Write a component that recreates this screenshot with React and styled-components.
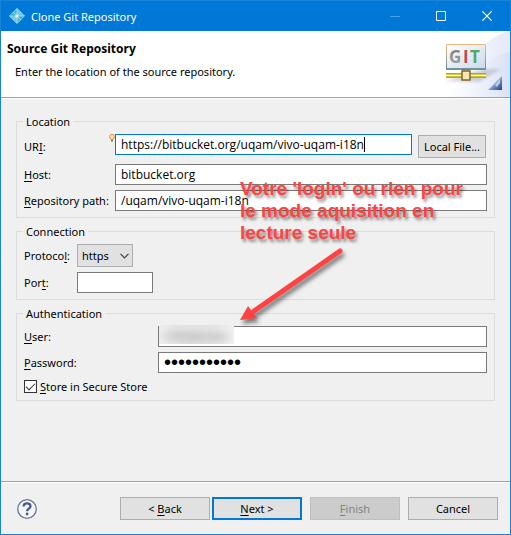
import React, { useEffect, useRef } from 'react'
import styled, { createGlobalStyle, css } from 'styled-components'

export default function App() {
    return (
        <>
            <GlobalStyle />
            <Dialog>
                <TitleBar>
                    <AppIcon />
                    <Caption>Clone Git Repository</Caption>
                    <CaptionButton type="button" aria-label="Minimize" disabled>
                        <svg width="10" height="10"><path d="M0 5.5h10" stroke="#4da0e3" /></svg>
                    </CaptionButton>
                    <CaptionButton type="button" aria-label="Maximize">
                        <svg width="10" height="10"><path d="M.5.5h9v9h-9z" fill="none" stroke="#fff" /></svg>
                    </CaptionButton>
                    <CaptionButton type="button" aria-label="Close">
                        <svg width="10" height="10"><path d="M.3.3l9.4 9.4M9.7.3L.3 9.7" stroke="#fff" strokeWidth="1.2" /></svg>
                    </CaptionButton>
                </TitleBar>
                <Header>
                    <Heading>
                        <Title>Source Git Repository</Title>
                        <Description>Enter the location of the source repository.</Description>
                    </Heading>
                    <GitBanner />
                </Header>
                <Body>
                    <LocationGroup />
                    <ConnectionGroup />
                    <AuthenticationGroup />
                </Body>
                <Footer>
                    <HelpButton type="button" aria-label="Help">
                        <HelpIcon />
                    </HelpButton>
                    <Steps>
                        <WizardButton type="button">&lt; <u>B</u>ack</WizardButton>
                        <WizardButton type="button" $primary><u>N</u>ext &gt;</WizardButton>
                    </Steps>
                    <WizardButton type="button" disabled><u>F</u>inish</WizardButton>
                    <WizardButton type="button">Cancel</WizardButton>
                </Footer>
                <Annotation />
            </Dialog>
        </>
    )
}

function LocationGroup() {
    const uri = useRef(null)

    useEffect(() => {
        const end = uri.current.value.length
        uri.current.focus()
        uri.current.setSelectionRange(end, end)
    }, [])

    return (
        <Group>
            <Legend>Location</Legend>
            <UriRow $label={91}>
                <LabelCell>
                    <Label htmlFor="uri">UR<u>I</u>:</Label>
                    <Bulb />
                </LabelCell>
                <UriFields>
                    <UriBox>
                        <TextInput id="uri" ref={uri} type="text" spellCheck={false} defaultValue="https://bitbucket.org/uqam/vivo-uqam-i18n" />
                        <Caret />
                    </UriBox>
                    <Button type="button">Local File...</Button>
                </UriFields>
            </UriRow>
            <Row $label={91}>
                <Label htmlFor="host"><u>H</u>ost:</Label>
                <TextInput id="host" type="text" spellCheck={false} defaultValue="bitbucket.org" />
            </Row>
            <Row $label={91}>
                <Label htmlFor="path"><u>R</u>epository path:</Label>
                <TextInput id="path" type="text" spellCheck={false} defaultValue="/uqam/vivo-uqam-i18n" />
            </Row>
        </Group>
    )
}

function ConnectionGroup() {
    return (
        <Group>
            <Legend>Connection</Legend>
            <Row $label={53}>
                <Label htmlFor="protocol">Protoco<u>l</u>:</Label>
                <SelectBox>
                    <Select id="protocol" defaultValue="https">
                        <option>https</option>
                        <option>ssh</option>
                        <option>git</option>
                    </Select>
                    <Chevron width="9" height="6"><path d="M.5.8l4 4 4-4" fill="none" stroke="#444" strokeWidth="1.2" /></Chevron>
                </SelectBox>
            </Row>
            <Row $label={53}>
                <Label htmlFor="port">Por<u>t</u>:</Label>
                <PortInput id="port" type="text" />
            </Row>
        </Group>
    )
}

function AuthenticationGroup() {
    return (
        <Group>
            <Legend>Authentication</Legend>
            <Row $label={134}>
                <Label htmlFor="user"><u>U</u>ser:</Label>
                <UserBox>
                    <TextInput id="user" type="text" />
                    <Redaction />
                </UserBox>
            </Row>
            <Row $label={134}>
                <Label htmlFor="password"><u>P</u>assword:</Label>
                <PasswordInput id="password" type="password" defaultValue="vivo-secret" />
            </Row>
            <CheckRow>
                <Checkbox id="store" type="checkbox" defaultChecked />
                <Label htmlFor="store"><u>S</u>tore in Secure Store</Label>
            </CheckRow>
        </Group>
    )
}

function Annotation() {
    return (
        <Note>
            <NoteText>
                Votre 'login' ou rien pour<br />
                le mode aquisition en<br />
                lecture seule
            </NoteText>
            <NoteArrow width="116" height="84">
                <path d="M100 7L14 67" stroke="#ff4343" strokeWidth="5" strokeLinecap="round" />
                <path d="M0 76L8 62L17 74z" fill="#ff4343" />
            </NoteArrow>
        </Note>
    )
}

function AppIcon() {
    return (
        <svg width="16" height="16" viewBox="0 0 16 16">
            <path d="M8 0l8 8-8 8-8-8z" fill="#35a9cf" />
            <path d="M8 0l8 8H8zM0 8h8v8z" fill="#63c6de" />
            <path d="M8 0L3 5l5 3zM13 11l-5 5V8z" fill="#4bb4d6" />
            <path d="M8 1v14M1 8h14M4 4l8 8M12 4l-8 8" stroke="#b5e9f2" strokeWidth=".8" />
            <path d="M8 .7L15.3 8 8 15.3.7 8z" fill="none" stroke="#8fd8e9" strokeDasharray="2 1" />
            <circle cx="8" cy="8" r="1.5" fill="#fff" />
        </svg>
    )
}

function Bulb() {
    return (
        <BulbSvg width="6" height="8" viewBox="0 0 6 8">
            <path d="M3 .5C1.5.5.5 1.5.5 2.7c0 1.1.9 1.5 1.2 2.600h2.600C4.600 4.200 5.500 3.800 5.500 2.700 5.500 1.500 4.500.5 3 .5z" fill="#fde0ae" stroke="#e8912d" />
            <path d="M2 6h2v1.500H2z" fill="#7c7c86" />
        </BulbSvg>
    )
}

function HelpIcon() {
    return (
        <svg width="20" height="20" viewBox="0 0 20 20">
            <circle cx="10" cy="10" r="9.3" fill="#f4f5f8" stroke="#66769b" strokeWidth="1.3" />
            <path d="M6.600 7.600C6.600 5.400 8 4.300 10 4.300s3.500 1.100 3.500 2.900c0 2.400-3.400 2.500-3.400 5" fill="none" stroke="#4b5c86" strokeWidth="2.3" />
            <circle cx="10.1" cy="15" r="1.4" fill="#4b5c86" />
        </svg>
    )
}

function GitBanner() {
    return (
        <BannerSvg width="75" height="66" viewBox="0 0 75 66">
            <defs>
                <linearGradient id="sky" x1="0" y1="0" x2="1" y2="0">
                    <stop offset=".1" stopColor="#fff" />
                    <stop offset="1" stopColor="#e4eaf8" />
                </linearGradient>
                <linearGradient id="wave" x1="0" y1="0" x2="1" y2="0">
                    <stop offset="0" stopColor="#fff" stopOpacity="0" />
                    <stop offset="1" stopColor="#d3dcf3" />
                </linearGradient>
                <linearGradient id="screen" x1="0" y1="0" x2="1" y2="1">
                    <stop offset="0" stopColor="#fff" />
                    <stop offset="1" stopColor="#ccd8ea" />
                </linearGradient>
                <linearGradient id="frame" x1="0" y1="0" x2="0" y2="1">
                    <stop offset="0" stopColor="#edb878" />
                    <stop offset=".5" stopColor="#a4aaa0" />
                    <stop offset="1" stopColor="#5f8790" />
                </linearGradient>
                <linearGradient id="letter" x1="0" y1="0" x2="0" y2="1">
                    <stop offset="0" stopColor="#777" />
                    <stop offset="1" stopColor="#aaa" />
                </linearGradient>
                <linearGradient id="fold" x1="0" y1="0" x2="1" y2="1">
                    <stop offset=".4" stopColor="#a9c6dc" />
                    <stop offset=".65" stopColor="#5f86b8" />
                    <stop offset="1" stopColor="#1d3c84" />
                </linearGradient>
                <filter id="soft"><feGaussianBlur stdDeviation="1.5" /></filter>
            </defs>
            <path d="M75 0C57 4 44 16 36 34C30 48 18 60 4 66H75z" fill="url(#sky)" />
            <path d="M75 21C60 23 50 34 42 45C34 56 26 62 14 66H75z" fill="url(#wave)" opacity=".7" />
            <path d="M10 50L50 38L66 38L44 51z" fill="#9a94a8" opacity=".4" filter="url(#soft)" />
            <path d="M11.500 13.500h39v25h-39z" fill="url(#screen)" stroke="url(#frame)" />
            <path d="M11 38h40" stroke="#6f949b" strokeWidth="2" />
            <GitLetter x="14" y="32" fill="url(#letter)">G</GitLetter>
            <GitLetter x="28" y="32" fill="#bc4a50">I</GitLetter>
            <GitLetter x="35" y="32" fill="#55a667">T</GitLetter>
            <path d="M11 42.500h40M11 46.500h40" stroke="#b5a51f" />
            <path d="M11 43.500h40" stroke="#d9cc45" />
            <path d="M11 44.500h40" stroke="#fffbd0" />
            <path d="M11 45.500h40" stroke="#cfc03a" />
            <path d="M29 38v2M33 38v2" stroke="#7b6d2a" />
            <rect x="27" y="40" width="8" height="9" fill="#fbe7b4" stroke="#7d6623" strokeWidth="1.5" />
            <path d="M53 59L67 45V59z" fill="url(#fold)" />
            <path d="M60 54l5-6v4l-3 4z" fill="#dcebf2" opacity=".7" />
        </BannerSvg>
    )
}

const GlobalStyle = createGlobalStyle`
    * {
        box-sizing: border-box;
    }

    body {
        margin: 0;
        font: 12px/17px "Noto Sans", "Open Sans", sans-serif;
        color: #000;
    }

    button, input, select {
        margin: 0;
        font: inherit;
        color: inherit;
        outline: none;
    }

    u {
        text-underline-offset: 2px;
        text-decoration-skip-ink: none;
    }
`

const Dialog = styled.div`
    position: relative;
    display: flex;
    flex-direction: column;
    min-height: 100vh;
    border: 1px solid #1883d7;
    background: #f0f0f0;
    font-size: 11px;
`

const TitleBar = styled.div`
    display: flex;
    align-items: center;
    height: 30px;
    padding-left: 8px;
    background: #0078d7;
    color: #fff;
`

const Caption = styled.div`
    flex: 1;
    padding-left: 6px;
`

const CaptionButton = styled.button`
    display: flex;
    align-items: center;
    justify-content: center;
    width: 46px;
    height: 28px;
    padding: 0;
    border: 0;
    background: none;
`

const Header = styled.header`
    display: flex;
    height: 68px;
    border-bottom: 1px solid #fff;
    background: #fff;
    box-shadow: inset 0 -1px #a0a0a0;
`

const Heading = styled.div`
    flex: 1;
    padding: 9px 0 0 6px;
`

const Title = styled.h1`
    margin: 0;
    font-size: 12px;
    line-height: 17px;
`

const Description = styled.p`
    margin: 6px 0 0 8px;
`

const BannerSvg = styled.svg`
    flex: none;
`

const GitLetter = styled.text`
    font: bold 17px "Open Sans", sans-serif;
`

const Body = styled.main`
    display: flex;
    flex: 1;
    flex-direction: column;
    gap: 5px;
    padding: 14px 15px;
`

const Group = styled.fieldset`
    min-width: 0;
    margin: 0;
    padding: 4px 7px 6px;
    border: 1px solid #dcdcdc;
`

const Legend = styled.legend`
    margin-left: -1px;
    padding: 0 3px;
`

const Row = styled.div`
    display: grid;
    grid-template-columns: ${p => p.$label}px 1fr;
    align-items: center;

    & + & {
        margin-top: 5px;
    }
`

const UriRow = styled(Row)`
    margin-bottom: 5px;
`

const LabelCell = styled.div`
    display: flex;
    align-items: center;
    justify-content: space-between;
    height: 25px;
`

const BulbSvg = styled.svg`
    align-self: flex-start;
`

const UriFields = styled.div`
    display: flex;
    align-items: center;
    gap: 6px;
    padding-right: 1px;

    button {
        width: 68px;
        margin: 1px 0;
    }
`

const UriBox = styled.div`
    position: relative;
    display: flex;
    flex: 1;
    align-self: flex-start;
`

const Caret = styled.span`
    position: absolute;
    top: 3px;
    left: 249px;
    width: 1px;
    height: 15px;
    background: #000;
`

const Label = styled.label`
    white-space: nowrap;
`

const TextInput = styled.input`
    min-width: 0;
    width: 100%;
    height: 21px;
    padding: 0 5px;
    border: 1px solid #7a7a7a;
    background: #fff;
    font: 12px "Open Sans", sans-serif;
    caret-color: transparent;

    &:focus {
        border-color: #0078d7;
    }
`

const PortInput = styled(TextInput)`
    width: 76px;
`

const PasswordInput = styled(TextInput)`
    font: 20px "Liberation Sans", Arial, sans-serif;
`

const SelectBox = styled.div`
    position: relative;
    width: 56px;
`

const Select = styled.select`
    display: block;
    width: 100%;
    height: 23px;
    padding: 0 4px;
    border: 1px solid #adadad;
    border-radius: 0;
    background: #e1e1e1;
    appearance: none;
`

const Chevron = styled.svg`
    position: absolute;
    top: 9px;
    right: 4px;
    pointer-events: none;
`

const UserBox = styled.div`
    position: relative;
    display: flex;
`

/* smudge hiding the user name */
const Redaction = styled.div`
    position: absolute;
    top: -1px;
    left: 1px;
    width: 75px;
    height: 19px;
    background:
        radial-gradient(ellipse 18px 9px at 18px 11px, #cfcfd1, transparent),
        radial-gradient(ellipse 22px 9px at 36px 12px, #cbcbcd, transparent),
        radial-gradient(ellipse 18px 9px at 57px 12px, #d0d0d2, transparent),
        linear-gradient(90deg, #ececec, #e2e2e3 30%, #e2e2e3 70%, #efefef);
`

const CheckRow = styled.div`
    display: flex;
    align-items: center;
    gap: 3px;
    height: 16px;
    margin-top: 5px;
`

const Checkbox = styled.input`
    width: 13px;
    height: 13px;
    border: 1px solid #333;
    background: #fff;
    appearance: none;

    &:checked::before {
        content: "";
        display: block;
        width: 8px;
        height: 4px;
        margin: 2px 0 0 1px;
        border: solid #333;
        border-width: 0 0 1px 1px;
        transform: rotate(-45deg);
    }
`

const Button = styled.button`
    height: 23px;
    padding: 0;
    border: 1px solid #adadad;
    background: #e1e1e1;
    white-space: nowrap;

    &:disabled {
        border-color: #bfbfbf;
        background: #ccc;
        color: #838383;
    }
`

const WizardButton = styled(Button)`
    width: 90px;

    ${p => p.$primary && css`
        border: 2px solid #0078d7;
    `}
`

const Footer = styled.footer`
    display: flex;
    align-items: center;
    gap: 8px;
    padding: 15px 12px 14px 16px;
    border-top: 1px solid #a0a0a0;
    box-shadow: inset 0 1px #fff;
`

const HelpButton = styled.button`
    height: 20px;
    margin-right: auto;
    padding: 0;
    border: 0;
    background: none;
`

const Steps = styled.div`
    display: flex;
    gap: 2px;
`

const Note = styled.div`
    position: absolute;
    top: 177px;
    left: 239px;
    color: #ff4343;
    pointer-events: none;
`

const NoteText = styled.p`
    margin: 0;
    font: bold 19px/22px "Liberation Sans", Arial, sans-serif;
    white-space: nowrap;
    text-shadow: 2px 3px 3px rgba(0, 0, 0, .45);
`

const NoteArrow = styled.svg`
    display: block;
    filter: drop-shadow(2px 4px 2px rgba(0, 0, 0, .5));
`
